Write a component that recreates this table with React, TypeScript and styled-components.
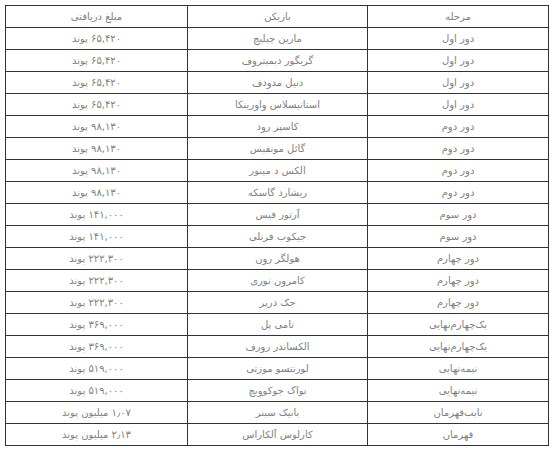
import React from 'react'
import styled, { createGlobalStyle } from 'styled-components'

const GlobalStyle = createGlobalStyle`
    body {
        margin: 0;
        background: #fff;
    }
`

type Row = {
    stage: string
    player: string
    prize: string
}

const rows: Row[] = [
    { stage: 'دور اول', player: 'مارین چیلیچ', prize: '۶۵,۴۲۰ پوند' },
    { stage: 'دور اول', player: 'گریگور دیمیتروف', prize: '۶۵,۴۲۰ پوند' },
    { stage: 'دور اول', player: 'دنیل مدودف', prize: '۶۵,۴۲۰ پوند' },
    { stage: 'دور اول', player: 'استانیسلاس واورینکا', prize: '۶۵,۴۲۰ پوند' },
    { stage: 'دور دوم', player: 'کاسپر رود', prize: '۹۸,۱۳۰ پوند' },
    { stage: 'دور دوم', player: 'گائل مونفیس', prize: '۹۸,۱۳۰ پوند' },
    { stage: 'دور دوم', player: 'الکس د مینور', prize: '۹۸,۱۳۰ پوند' },
    { stage: 'دور دوم', player: 'ریشارد گاسکه', prize: '۹۸,۱۳۰ پوند' },
    { stage: 'دور سوم', player: 'آرتور فیس', prize: '۱۴۱,۰۰۰ پوند' },
    { stage: 'دور سوم', player: 'جیکوب فرنلی', prize: '۱۴۱,۰۰۰ پوند' },
    { stage: 'دور چهارم', player: 'هولگر رون', prize: '۲۲۲,۳۰۰ پوند' },
    { stage: 'دور چهارم', player: 'کامرون نوری', prize: '۲۲۲,۳۰۰ پوند' },
    { stage: 'دور چهارم', player: 'جک درپر', prize: '۲۲۲,۳۰۰ پوند' },
    { stage: 'یک‌چهارم‌نهایی', player: 'تامی پل', prize: '۳۶۹,۰۰۰ پوند' },
    { stage: 'یک‌چهارم‌نهایی', player: 'الکساندر زورف', prize: '۳۶۹,۰۰۰ پوند' },
    { stage: 'نیمه‌نهایی', player: 'لورنتسو موزتی', prize: '۵۱۹,۰۰۰ پوند' },
    { stage: 'نیمه‌نهایی', player: 'نواک جوکوویچ', prize: '۵۱۹,۰۰۰ پوند' },
    { stage: 'نایب‌قهرمان', player: 'یانیک سینر', prize: '۱٫۰۷ میلیون پوند' },
    { stage: 'قهرمان', player: 'کارلوس آلکاراس', prize: '۲٫۱۳ میلیون پوند' },
]

export default function App() {
    return (
        <Page>
            <GlobalStyle />
            <Table dir="rtl">
                <Cell>مرحله</Cell>
                <Cell>بازیکن</Cell>
                <Cell>مبلغ دریافتی</Cell>
                {rows.map((r, i) => (
                    <React.Fragment key={i}>
                        <Cell>{r.stage}</Cell>
                        <Cell>{r.player}</Cell>
                        <Cell>{r.prize}</Cell>
                    </React.Fragment>
                ))}
            </Table>
        </Page>
    )
}

const Page = styled.div`
    padding: 5px;
`

// grid lines are the dark background showing through the 1px gaps
const Table = styled.div`
    display: grid;
    grid-template-columns: 180px 179px 181px;
    grid-auto-rows: 21px;
    gap: 1px;
    padding: 1px;
    width: max-content;
    background: #333;
    font-family: "DejaVu Sans", "Noto Sans", sans-serif;
    font-size: 10px;
    color: #808080;
`

const Cell = styled.div`
    background: #fff;
    display: flex;
    align-items: center;
    justify-content: center;
    white-space: nowrap;
`
